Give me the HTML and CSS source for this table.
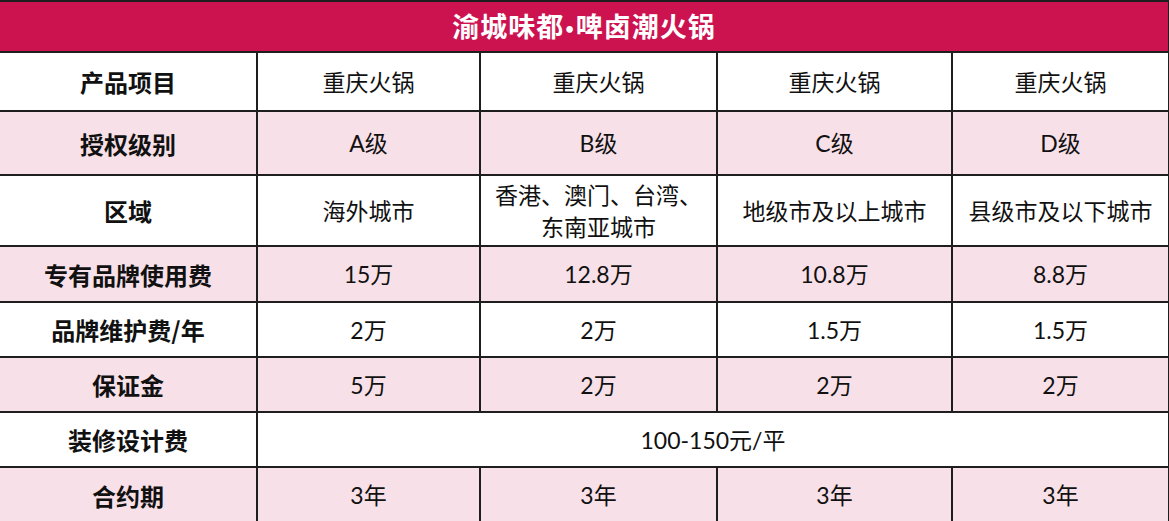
FILE: index.html
```html
<!DOCTYPE html>
<html lang="zh-CN">
<head>
<meta charset="utf-8">
<title>渝城味都•啤卤潮火锅</title>
<link rel="stylesheet" href="styles.css">
</head>
<body>
<table class="fee">
  <colgroup>
    <col class="c0"><col class="c1"><col class="c2"><col class="c3"><col class="c4">
  </colgroup>
  <tr class="r-title"><th colspan="5" class="title">渝城味都<span class="dot">•</span>啤卤潮火锅</th></tr>
  <tr class="r1 white"><th>产品项目</th><td>重庆火锅</td><td>重庆火锅</td><td>重庆火锅</td><td>重庆火锅</td></tr>
  <tr class="r2 pink"><th>授权级别</th><td>A级</td><td>B级</td><td>C级</td><td>D级</td></tr>
  <tr class="r3 white"><th>区域</th><td>海外城市</td><td class="two">香港、澳门、台湾、<br>东南亚城市</td><td>地级市及以上城市</td><td>县级市及以下城市</td></tr>
  <tr class="r4 pink"><th>专有品牌使用费</th><td>15万</td><td>12.8万</td><td>10.8万</td><td>8.8万</td></tr>
  <tr class="r5 white"><th>品牌维护费/年</th><td>2万</td><td>2万</td><td>1.5万</td><td>1.5万</td></tr>
  <tr class="r6 pink"><th>保证金</th><td>5万</td><td>2万</td><td>2万</td><td>2万</td></tr>
  <tr class="r7 white"><th>装修设计费</th><td colspan="4">100-150元/平</td></tr>
  <tr class="r8 pink"><th>合约期</th><td>3年</td><td>3年</td><td>3年</td><td>3年</td></tr>
</table>
</body>
</html>
```
FILE: styles.css
```css
html, body {
  margin: 0;
  padding: 0;
  background: #ffffff;
}
body {
  font-family: Lato, "Noto Sans CJK SC", sans-serif;
  color: #111111;
}
.fee {
  border-collapse: collapse;
  table-layout: fixed;
  width: 1169px;
  border-top: 2px solid #1e1e1e;
}
.c0 { width: 257px; }
.c1 { width: 223px; }
.c2 { width: 237px; }
.c3 { width: 235px; }
.c4 { width: 217px; }

.fee th, .fee td {
  border: 2px solid #1e1e1e;
  padding: 0;
  text-align: center;
  vertical-align: middle;
}
.fee tr > :first-child { border-left: none; }
.fee td {
  font-size: 23px;
  font-weight: 400;
  line-height: 30px;
}
.fee th {
  font-size: 24px;
  font-weight: 700;
  font-family: "Noto Sans CJK SC", sans-serif;
}
.fee .title {
  background: #cd1250;
  color: #ffffff;
  font-size: 27px;
  letter-spacing: 1px;
  line-height: 36px;
  height: 49px;
  border-top: none;
}
.title .dot {
  font-family: Lato, sans-serif;
  font-size: 15px;
  vertical-align: 3px;
  margin: 0 1px;
}
.white { background: #ffffff; }
.pink { background: #f8e0e8; }
.r1 { height: 59px; }
.r1 > * { padding-top: 3px; }
.r2 { height: 64px; }
.r3 { height: 71px; }
.r4 { height: 56px; }
.r5 { height: 55px; }
.r6 { height: 55px; }
.r7 { height: 55px; }
.r8 { height: 56px; }
.fee .two { line-height: 32px; }
```
